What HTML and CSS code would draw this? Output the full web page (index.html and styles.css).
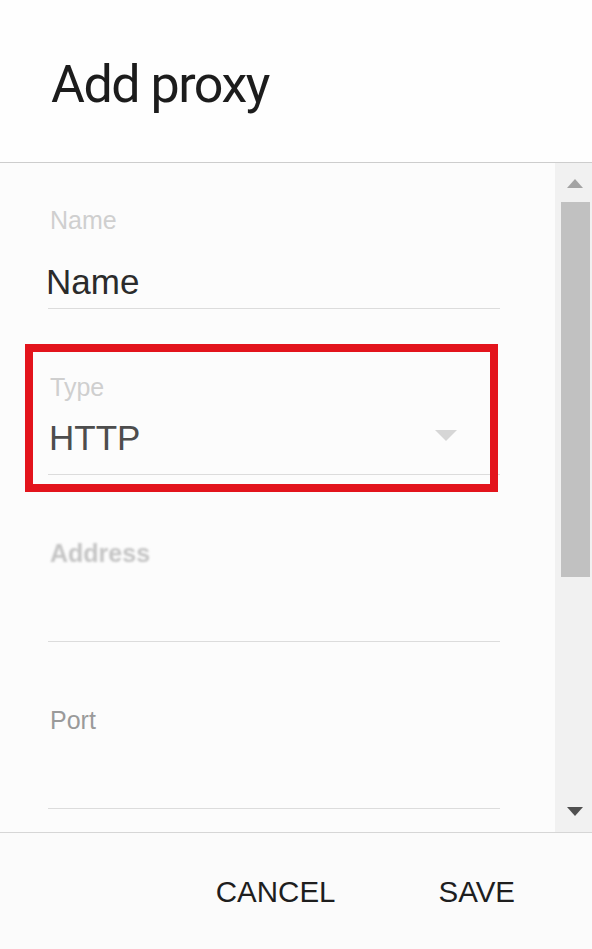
FILE: index.html
```html
<!DOCTYPE html>
<html lang="en">
<head>
  <meta charset="UTF-8">
  <meta name="viewport" content="width=device-width, initial-scale=1.0">
  <title>Add proxy</title>
  <link rel="stylesheet" href="styles.css">
</head>
<body>
<div class="dialog">
  <div class="dialog-header">
    <h1>Add proxy</h1>
  </div>

  <div class="dialog-body">
    <div class="form">
      <div class="field">
        <label class="field-label">Name</label>
        <div class="field-value">Name</div>
      </div>

      <div class="field field-select">
        <label class="field-label">Type</label>
        <div class="field-value">
          <span>HTTP</span>
          <span class="caret"></span>
        </div>
        <div class="highlight"></div>
      </div>

      <div class="field">
        <label class="field-label label-blur">Address</label>
        <div class="field-value">&nbsp;</div>
      </div>

      <div class="field">
        <label class="field-label label-dark">Port</label>
        <div class="field-value">&nbsp;</div>
      </div>
    </div>

    <div class="scrollbar">
      <span class="arrow-up"></span>
      <div class="thumb"></div>
      <span class="arrow-down"></span>
    </div>
  </div>

  <div class="dialog-footer">
    <button class="btn-text">CANCEL</button>
    <button class="btn-text">SAVE</button>
  </div>
</div>
</body>
</html>
```

FILE: styles.css
```css
* { margin: 0; padding: 0; box-sizing: border-box; }

body {
  font-family: 'Liberation Sans', Arial, sans-serif;
  background: #fdfdfd;
  color: #222;
}

.dialog {
  width: 592px;
  height: 949px;
  display: flex;
  flex-direction: column;
}

/* Header */
.dialog-header {
  height: 163px;
  padding: 55px 0 0 51px;
  background: #fefefe;
  border-bottom: 1px solid #cdcdcd;
}

.dialog-header h1 {
  font-family: Roboto, sans-serif;
  font-weight: 400;
  font-size: 52px;
  line-height: 60px;
  letter-spacing: -1.5px;
  color: #1c1c1c;
}

/* Body */
.dialog-body {
  height: 669px;
  display: flex;
  background: #fcfcfc;
}

.form {
  flex: 1;
  padding: 42px 55px 0 48px;
  display: flex;
  flex-direction: column;
  gap: 63px;
}

.field {
  position: relative;
  border-bottom: 1px solid #dcdcdc;
  padding-bottom: 6px;
}

.field-label {
  display: block;
  padding-left: 2px;
  font-size: 25px;
  line-height: 30px;
  color: #cfcfcf;
}

.label-blur {
  color: #c4c4c4;
  font-weight: 700;
  filter: blur(0.8px);
}

.label-dark {
  color: #9a9a9a;
}

.field-value {
  margin-top: 27px;
  font-size: 35px;
  line-height: 40px;
  color: #2b2b2b;
  margin-left: -2px;
}

.field-select {
  padding-bottom: 16px;
}

.field-select .field-value {
  margin-top: 16px;
  margin-left: 1px;
  display: flex;
  justify-content: space-between;
  align-items: center;
  padding-right: 43px;
  color: #4d4d4d;
}

.caret {
  width: 0;
  height: 0;
  border-left: 11px solid transparent;
  border-right: 11px solid transparent;
  border-top: 11px solid #d6d6d6;
  margin-bottom: 5px;
}

/* red annotation frame round the Type field */
.highlight {
  position: absolute;
  left: -23px;
  top: -28px;
  right: 2px;
  bottom: -18px;
  border: 8px solid #e3141c;
}

/* Scrollbar */
.scrollbar {
  width: 37px;
  background: #f1f1f1;
  display: flex;
  flex-direction: column;
  align-items: center;
}

.arrow-up {
  margin-top: 16px;
  margin-left: 3px;
  border-left: 8px solid transparent;
  border-right: 8px solid transparent;
  border-bottom: 9px solid #a3a3a3;
}

.thumb {
  margin-top: 14px;
  width: 29px;
  height: 375px;
  align-self: flex-end;
  margin-right: 2px;
  background: #c1c1c1;
}

.arrow-down {
  margin-top: auto;
  margin-bottom: 16px;
  margin-left: 3px;
  border-left: 8px solid transparent;
  border-right: 8px solid transparent;
  border-top: 9px solid #505050;
}

/* Footer */
.dialog-footer {
  flex: 1;
  border-top: 1px solid #d6d6d6;
  background: #fbfbfb;
  display: flex;
  justify-content: flex-end;
  align-items: flex-start;
  gap: 103px;
  padding: 42px 77px 0 0;
}

.btn-text {
  background: none;
  border: none;
  font-family: 'Liberation Sans', Arial, sans-serif;
  font-size: 29.5px;
  line-height: 34px;
  color: #1e1e1e;
  cursor: pointer;
}
```
